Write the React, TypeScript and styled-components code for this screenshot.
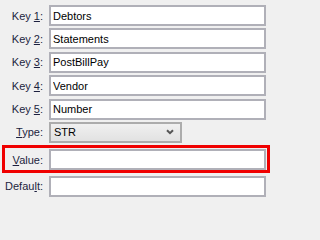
import styled, { createGlobalStyle } from 'styled-components'

const GlobalStyle = createGlobalStyle`
  html, body {
    margin: 0;
    padding: 0;
    background: #f0f0f0;
  }
  body {
    font-family: "Liberation Sans", Arial, sans-serif;
    font-size: 11px;
  }
`;

const Form = styled.div`
  width: 271px;
  box-sizing: border-box;
  padding: 5px 5px 0 2px;
  display: flex;
  flex-direction: column;
  gap: 2.4px;
`;

const Row = styled.div<{ $highlight?: boolean }>`
  display: grid;
  grid-template-columns: ${p => (p.$highlight ? '38px' : '41px')} 1fr;
  column-gap: 6px;
  align-items: center;
  ${p => p.$highlight && `
    border: 3px solid #f00000;
    border-left-width: 3px;
    padding: 1px 1px 0 0;
    margin-right: -4px;
  `}
`;

const Label = styled.label`
  text-align: right;
  color: #1c1f3e;
  white-space: nowrap;

  u {
    text-decoration: underline;
    text-underline-offset: 1px;
  }
`;

const TextBox = styled.input`
  box-sizing: border-box;
  height: 21px;
  width: 100%;
  margin: 0;
  padding: 0 0 0 2px;
  border: 2px solid #b0b0b8;
  border-radius: 0;
  background: #ffffff;
  font-family: "Liberation Sans", Arial, sans-serif;
  font-size: 11px;
  color: #000000;
  outline: none;
`;

const SelectBox = styled.div`
  box-sizing: border-box;
  height: 21px;
  width: 133px;
  display: flex;
  align-items: center;
  justify-content: space-between;
  padding: 0 6px 0 3px;
  border: 2px solid #acacac;
  background: linear-gradient(#f0f0f0, #e2e2e2);
  color: #000000;
`;

const Chevron = () => (
  <svg width="8" height="6" viewBox="0 0 8 6">
    <path d="M1 1.2 L4 4.2 L7 1.2" fill="none" stroke="#555555" strokeWidth="2" />
  </svg>
);

const keys = [
  { n: '1', v: 'Debtors' },
  { n: '2', v: 'Statements' },
  { n: '3', v: 'PostBillPay' },
  { n: '4', v: 'Vendor' },
  { n: '5', v: 'Number' },
];

export default function App() {
  return (
    <>
      <GlobalStyle />
      <Form>
        {keys.map(k => (
          <Row key={k.n}>
            <Label>Key <u>{k.n}</u>:</Label>
            <TextBox readOnly defaultValue={k.v} />
          </Row>
        ))}
        <Row>
          <Label><u>T</u>ype:</Label>
          <SelectBox>
            <span>STR</span>
            <Chevron />
          </SelectBox>
        </Row>
        <Row $highlight>
          <Label><u>V</u>alue:</Label>
          <TextBox readOnly defaultValue="" />
        </Row>
        <Row>
          <Label>Defau<u>l</u>t:</Label>
          <TextBox readOnly defaultValue="" />
        </Row>
      </Form>
    </>
  )
}
